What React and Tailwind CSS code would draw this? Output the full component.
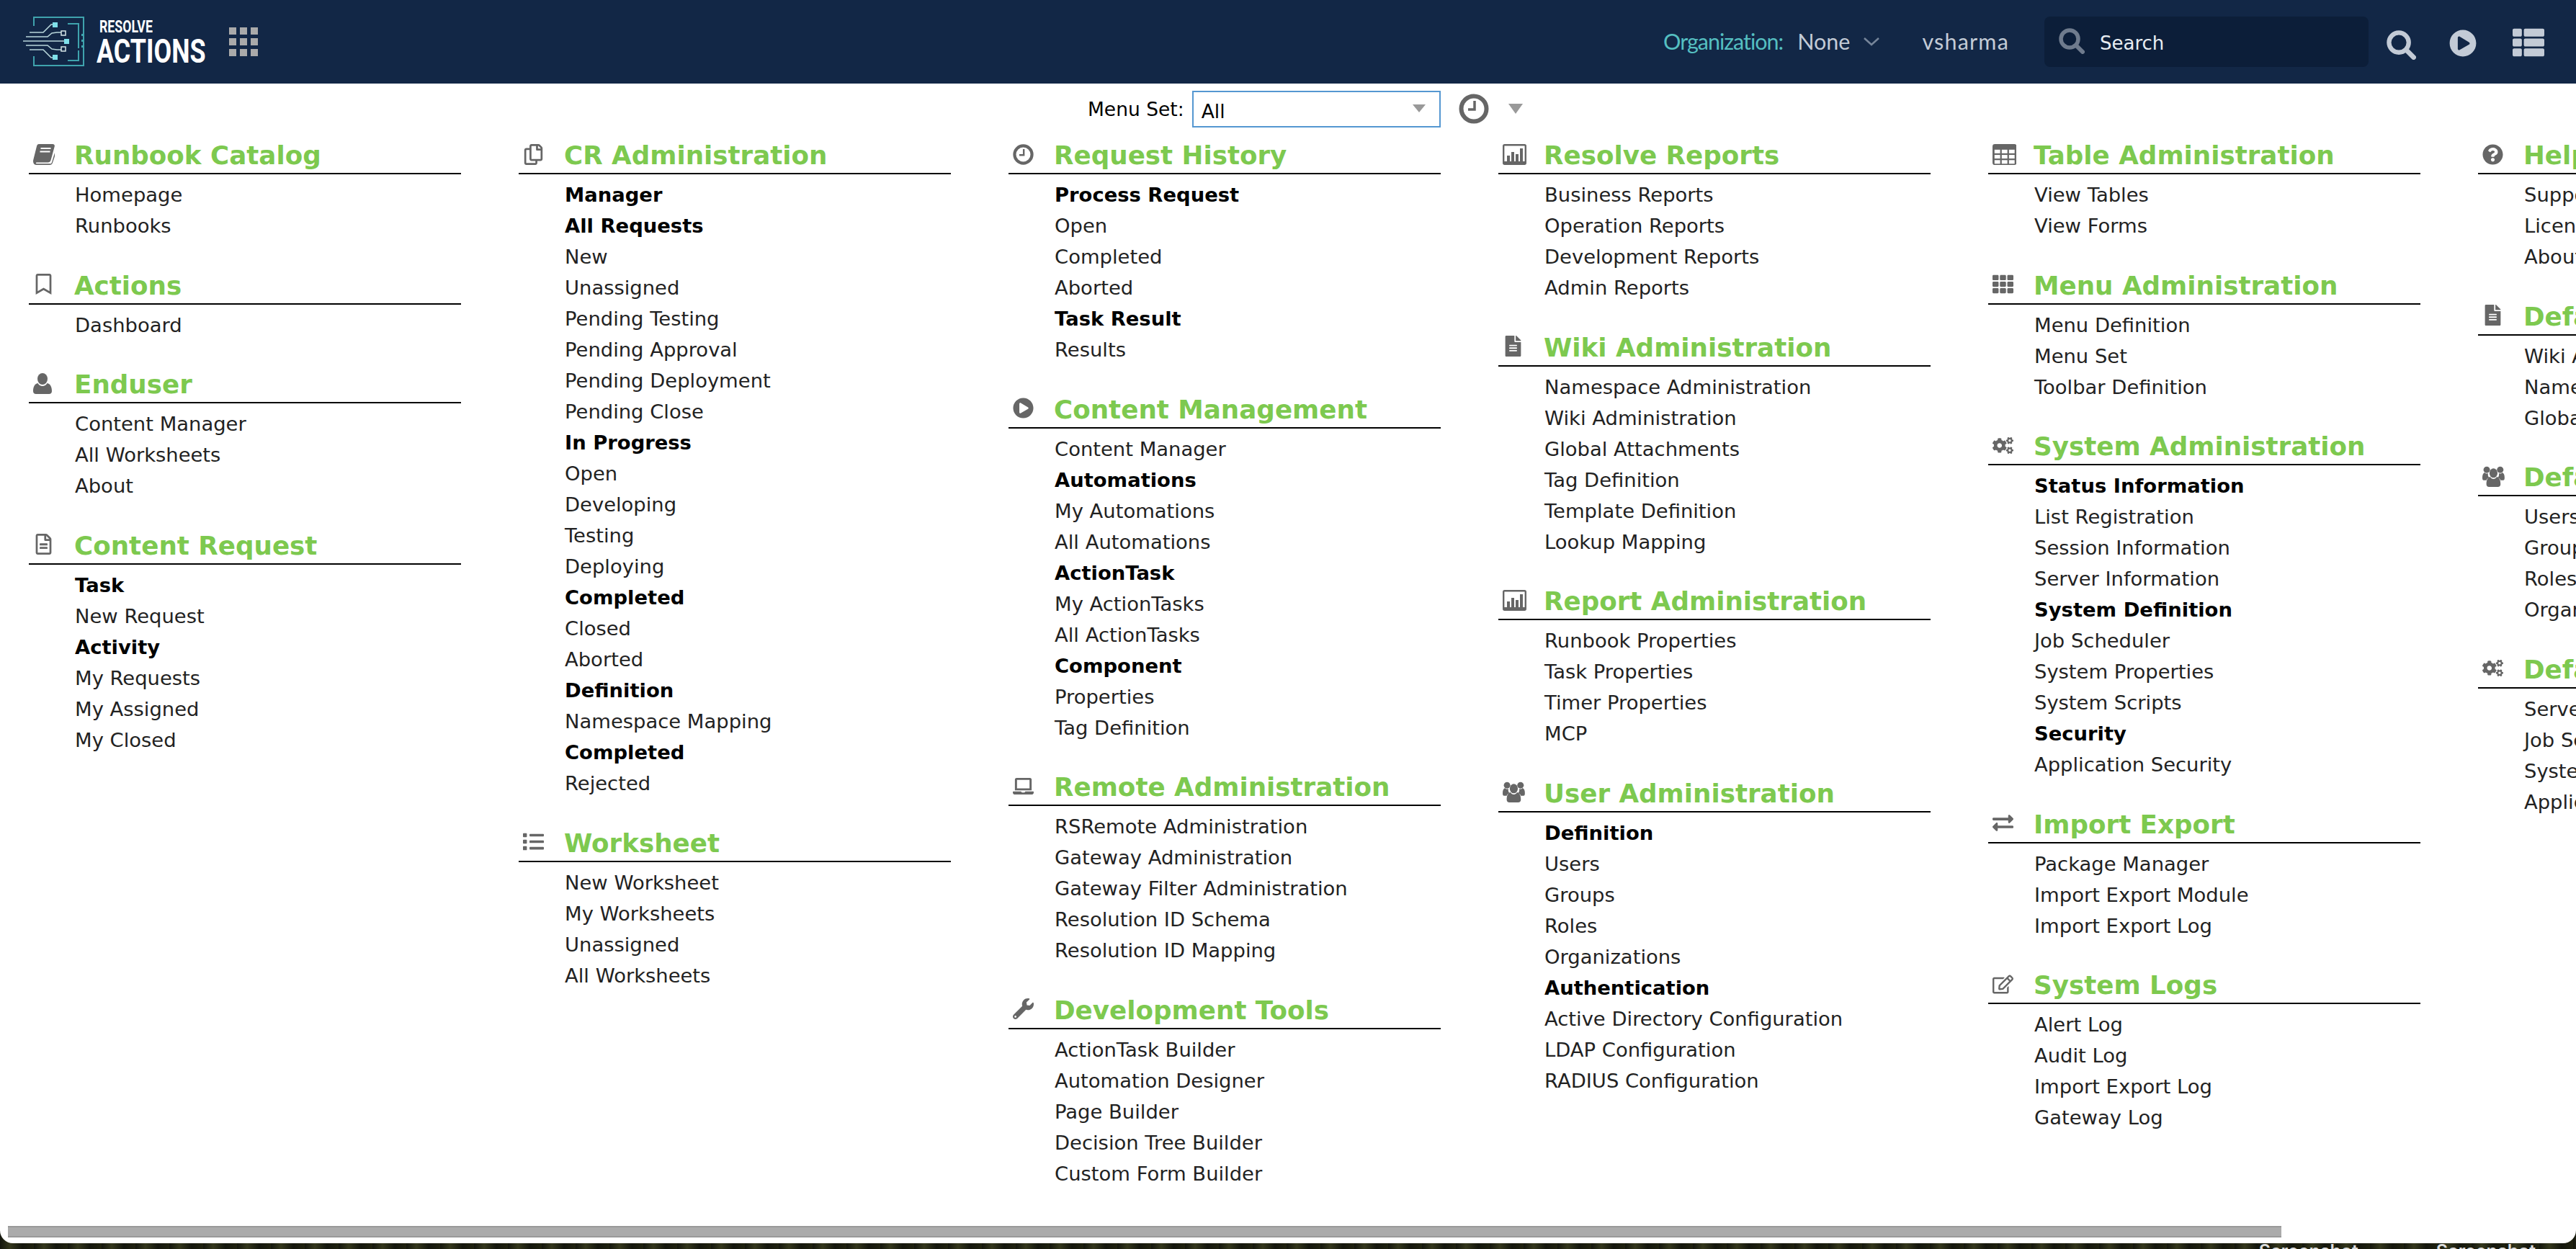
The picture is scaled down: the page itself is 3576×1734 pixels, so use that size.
import { FaRegBookmark, FaRegFileAlt, FaRegCopy, FaList, FaPlayCircle, FaLaptop, FaWrench, FaFileAlt, FaTh, FaCogs, FaExchangeAlt, FaRegEdit, FaQuestionCircle, FaThList } from 'react-icons/fa';

const b = (label) => ({ label, bold: true });

// drawn by hand, the old font-awesome glyphs are not in the icon package
const BookIcon = ({ className }) => (
    <svg className={className} viewBox="0 0 30 29" fill="currentColor">
        <path d="M8 0h19c2.200 0 3.300 1.500 2.700 3.500l-5.200 19c-.6 2-2 3-4 3H5.500c-2.200 0-2.200 1.800 0 1.800h18c1.200 0 2-.6 2.400-1.900L30 12v5l-3 9c-.6 2-2 3-4 3H5c-3.200 0-5-2-5-5 0-.8.1-1.500.3-2.200L5 3c.5-2 1.400-3 3-3z" />
        <path d="M10.500 6h14M9.500 10.500h14" stroke="#fff" strokeWidth="1.800" />
    </svg>
);
const ChartIcon = ({ className }) => (
    <svg className={className} viewBox="0 0 33 29" fill="currentColor">
        <rect x="1.200" y="1.200" width="30.600" height="26.600" rx="1.500" fill="none" stroke="currentColor" strokeWidth="2.400" />
        <rect x="1" y="24" width="31" height="4" />
        <rect x="6" y="16" width="4" height="8" />
        <rect x="12" y="11" width="4" height="13" />
        <rect x="18" y="14" width="4" height="10" />
        <rect x="24" y="6" width="4" height="18" />
    </svg>
);
const UserIcon = ({ className }) => (
    <svg className={className} viewBox="0 0 26 29" fill="currentColor">
        <ellipse cx="13" cy="8" rx="7" ry="8" />
        <path d="M0 25c0-6 2-10 6.500-11 1.500 2.500 3.800 4 6.500 4s5-1.500 6.500-4C24 15 26 19 26 25c0 2.500-1.500 4-4 4H4c-2.500 0-4-1.500-4-4z" />
    </svg>
);
const UsersIcon = ({ className }) => (
    <svg className={className} viewBox="0 0 33 31" fill="currentColor">
        <ellipse cx="16.500" cy="10.500" rx="6" ry="7" />
        <path d="M6 27c0-6 1.500-10 5.500-11 1.300 2 3 3.200 5 3.200s3.700-1.200 5-3.200c4 1 5.500 5 5.500 11 0 2.500-1.500 4-4 4H10c-2.500 0-4-1.500-4-4z" />
        <circle cx="6.500" cy="5.500" r="4.800" />
        <circle cx="26.500" cy="5.500" r="4.800" />
        <path d="M0 17c0-4 1-6.500 3.500-7.500 1 1.200 2 1.800 3 1.800.8 0 1.500-.2 2.200-.7-.4 1-.5 2-.4 3 .2 1.300.8 2.500 1.700 3.400-2.200.8-3.400 2-4 4H2c-1.300 0-2-1-2-4zM33 17c0-4-1-6.500-3.500-7.500-1 1.200-2 1.800-3 1.800-.8 0-1.500-.2-2.200-.7.4 1 .5 2 .4 3-.2 1.300-.8 2.500-1.700 3.400 2.200.8 3.400 2 4 4H31c1.300 0 2-1 2-4z" />
    </svg>
);
const TableIcon = ({ className }) => (
    <svg className={className} viewBox="0 0 30 26">
        <rect width="30" height="26" rx="3" fill="currentColor" />
        {[7, 13.500, 20].map((y) => [2.500, 11.500, 20.500].map((x) => <rect fill="#fff" height="4.500" key={`${x}-${y}`} width="7" x={x} y={y} />))}
    </svg>
);
const ClockIcon = ({ className }) => (
    <svg className={className} viewBox="0 0 42 42" fill="none" stroke="currentColor">
        <circle cx="21" cy="21" r="17.500" strokeWidth="6" />
        <path d="M22 10v12h-9" strokeWidth="3.500" />
    </svg>
);
const SearchGlass = ({ className }) => (
    <svg className={className} viewBox="0 0 36 36" fill="none" stroke="currentColor">
        <circle cx="15" cy="15" r="12" strokeWidth="5.500" />
        <path d="M24 24l9 9" strokeWidth="6" strokeLinecap="round" />
    </svg>
);

const columns = [
    [
        { title: 'Runbook Catalog', icon: BookIcon, items: ['Homepage', 'Runbooks'] },
        { title: 'Actions', icon: FaRegBookmark, items: ['Dashboard'] },
        { title: 'Enduser', icon: UserIcon, items: ['Content Manager', 'All Worksheets', 'About'] },
        { title: 'Content Request', icon: FaRegFileAlt, items: [b('Task'), 'New Request', b('Activity'), 'My Requests', 'My Assigned', 'My Closed'] },
    ],
    [
        { title: 'CR Administration', icon: FaRegCopy, items: [b('Manager'), b('All Requests'), 'New', 'Unassigned', 'Pending Testing', 'Pending Approval', 'Pending Deployment', 'Pending Close', b('In Progress'), 'Open', 'Developing', 'Testing', 'Deploying', b('Completed'), 'Closed', 'Aborted', b('Definition'), 'Namespace Mapping', b('Completed'), 'Rejected'] },
        { title: 'Worksheet', icon: FaList, items: ['New Worksheet', 'My Worksheets', 'Unassigned', 'All Worksheets'] },
    ],
    [
        { title: 'Request History', icon: ClockIcon, items: [b('Process Request'), 'Open', 'Completed', 'Aborted', b('Task Result'), 'Results'] },
        { title: 'Content Management', icon: FaPlayCircle, items: ['Content Manager', b('Automations'), 'My Automations', 'All Automations', b('ActionTask'), 'My ActionTasks', 'All ActionTasks', b('Component'), 'Properties', 'Tag Definition'] },
        { title: 'Remote Administration', icon: FaLaptop, items: ['RSRemote Administration', 'Gateway Administration', 'Gateway Filter Administration', 'Resolution ID Schema', 'Resolution ID Mapping'] },
        { title: 'Development Tools', icon: FaWrench, items: ['ActionTask Builder', 'Automation Designer', 'Page Builder', 'Decision Tree Builder', 'Custom Form Builder'] },
    ],
    [
        { title: 'Resolve Reports', icon: ChartIcon, items: ['Business Reports', 'Operation Reports', 'Development Reports', 'Admin Reports'] },
        { title: 'Wiki Administration', icon: FaFileAlt, items: ['Namespace Administration', 'Wiki Administration', 'Global Attachments', 'Tag Definition', 'Template Definition', 'Lookup Mapping'] },
        { title: 'Report Administration', icon: ChartIcon, items: ['Runbook Properties', 'Task Properties', 'Timer Properties', 'MCP'] },
        { title: 'User Administration', icon: UsersIcon, items: [b('Definition'), 'Users', 'Groups', 'Roles', 'Organizations', b('Authentication'), 'Active Directory Configuration', 'LDAP Configuration', 'RADIUS Configuration'] },
    ],
    [
        { title: 'Table Administration', icon: TableIcon, items: ['View Tables', 'View Forms'] },
        { title: 'Menu Administration', icon: FaTh, items: ['Menu Definition', 'Menu Set', 'Toolbar Definition'] },
        { title: 'System Administration', icon: FaCogs, items: [b('Status Information'), 'List Registration', 'Session Information', 'Server Information', b('System Definition'), 'Job Scheduler', 'System Properties', 'System Scripts', b('Security'), 'Application Security'] },
        { title: 'Import Export', icon: FaExchangeAlt, items: ['Package Manager', 'Import Export Module', 'Import Export Log'] },
        { title: 'System Logs', icon: FaRegEdit, items: ['Alert Log', 'Audit Log', 'Import Export Log', 'Gateway Log'] },
    ],
    [
        { title: 'Help', icon: FaQuestionCircle, items: ['Support', 'License Information', 'About'] },
        { title: 'Default Wiki', icon: FaFileAlt, items: ['Wiki Administration', 'Namespace Administration', 'Global Attachments'] },
        { title: 'Default Users', icon: UsersIcon, items: ['Users', 'Groups', 'Roles', 'Organizations'] },
        { title: 'Default System', icon: FaCogs, items: ['Server Information', 'Job Scheduler', 'System Properties', 'Application Security'] },
    ],
];

function Logo() {
    return (
        <svg className="h-[72px] w-[90px] shrink-0" viewBox="0 0 90 72" fill="none">
            <path d="M15 14V2h69v67H15V56" stroke="#3fa3ad" strokeWidth="2" />
            <path d="M62 11h15v34M62 62h15V48" stroke="#3fa3ad" strokeWidth="2" />
            <path d="M82 25v3M82 33v3M82 41v3" stroke="#3fa3ad" strokeWidth="2" />
            <path d="M9 23h19l11-11h6M4 29h30l6-5 7-1h6M0 35h60M4 41h30l6 5 7 1h6M9 47h19l11 11h6" stroke="#b8d6da" strokeWidth="1.600" />
            <rect x="41" y="9" width="7" height="7" fill="#7fe0ea" />
            <rect x="41" y="54" width="7" height="7" fill="#7fe0ea" />
            <rect x="57" y="32" width="7" height="7" fill="#7fe0ea" />
            <rect x="53" y="21" width="6" height="6" stroke="#d7e6e8" strokeWidth="1.500" />
            <rect x="53" y="43" width="6" height="6" stroke="#d7e6e8" strokeWidth="1.500" />
        </svg>
    );
}

function Section({ section }) {
    const Icon = section.icon;
    return (
        <section className="mb-[39.5px]">
            <div className="flex h-[48px] items-center border-b-2 border-black">
                <span className="flex w-[63px] shrink-0 -translate-y-[3px] pl-[6px] text-[#666]"><Icon className="h-[29px] w-auto" /></span>
                <h2 className="-translate-y-[1px] whitespace-nowrap text-[35.7px] leading-[46px] font-bold text-[#7dc94f]">{section.title}</h2>
            </div>
            <ul className="pt-[7px] pl-[64px]">
                {section.items.map((item, i) => {
                    const bold = typeof item !== 'string';
                    return <li className={`h-[43px] whitespace-nowrap text-[27.4px] leading-[43px] ${bold ? 'font-bold text-black' : 'text-[#222]'}`} key={i}>{bold ? item.label : item}</li>;
                })}
            </ul>
        </section>
    );
}

export default function App() {
    return (
        <div className="h-[1734px] w-[3576px] overflow-hidden bg-[repeating-linear-gradient(90deg,#14160d_0px,#34371c_14px,#14160d_31px,#20220f_47px)] font-['DejaVu_Sans',sans-serif]">
            <div className="flex h-[1726px] flex-col overflow-hidden rounded-b-[18px] bg-white">
                <header className="flex h-[116px] shrink-0 items-center bg-[#122746] pl-[32px] text-[#c3cbd6]">
                    <Logo />
                    <div className="mt-[2px] ml-[13px] flex w-[150px] flex-col font-['Roboto',sans-serif] font-bold text-white">
                        <span className="ml-[3px] origin-left scale-x-[0.77] text-[23px] leading-[24px] whitespace-nowrap">RESOLVE</span>
                        <span className="-ml-[1px] origin-left scale-x-[0.78] text-[46px] leading-[42px] whitespace-nowrap">ACTIONS</span>
                    </div>
                    <div className="ml-[33px] grid grid-cols-3 gap-[5px]">
                        {Array.from({ length: 9 }).map((_, i) => <span className="size-[10px] bg-[#aaa]" key={i} />)}
                    </div>
                    <div className="ml-auto flex items-center pr-[44px] font-['Lato',sans-serif] text-[30.5px]">
                        <span className="tracking-[-1px] text-[#55bfc1]">Organization:</span>
                        <span className="ml-[20px]">None</span>
                        <svg className="ml-[19px] h-[12px] w-[22px]" viewBox="0 0 22 12" fill="none" stroke="#76859a" strokeWidth="2.500"><path d="M1 1l10 9 10-9" /></svg>
                        <span className="ml-[59px] tracking-[1.2px]">vsharma</span>
                        <div className="ml-[49px] flex h-[70px] w-[450px] items-center rounded-[8px] bg-[#0c1e39] pl-[20px] font-['DejaVu_Sans',sans-serif] tracking-normal">
                            <SearchGlass className="size-[36px] -translate-y-[1px] text-[#6f7b8d]" />
                            <span className="ml-[21px] translate-y-[2px] text-[26px] text-[#e8edf2]">Search</span>
                        </div>
                        <SearchGlass className="ml-[25px] size-[41px] translate-y-[4px]" />
                        <FaPlayCircle className="ml-[46px] size-[38px] translate-y-[2px]" />
                        <FaThList className="ml-[50px] size-[44px] translate-y-[1px]" />
                    </div>
                </header>
                <div className="flex h-[64px] shrink-0 items-center pt-[7px] pl-[1510px]">
                    <span className="text-[26.5px] text-black">Menu Set:</span>
                    <div className="ml-[11px] flex h-[51px] w-[345px] items-center justify-between border-2 border-[#5597d1] pr-[19px] pl-[11px] text-[26.5px] text-black">
                        <span className="translate-y-[3px]">All</span>
                        <span className="-translate-y-[1px] border-x-[9px] border-t-[11px] border-x-transparent border-t-[#999]" />
                    </div>
                    <ClockIcon className="ml-[25px] size-[42px] -translate-y-[1px] text-[#666]" />
                    <span className="ml-[27px] -translate-y-[1px] border-x-[10px] border-t-[14px] border-x-transparent border-t-[#999]" />
                </div>
                <div className="flex min-h-0 flex-1 gap-[80px] overflow-hidden pt-[14px] pl-[40px]">
                    {columns.map((col, i) => (
                        <div className="w-[600px] shrink-0" key={i}>
                            {col.map((section) => <Section key={section.title} section={section} />)}
                        </div>
                    ))}
                </div>
                <div className="h-[24px] shrink-0 pl-[11px]">
                    <div className="h-[16px] w-[3156px] border-y-2 border-[#999] bg-[#ababab]" />
                </div>
            </div>
            <div className="flex justify-end gap-[108px] pr-[56px] font-['Inter',sans-serif] text-[25px] leading-[22px] font-semibold text-[#ddd]">
                <span>Screenshot</span>
                <span>Screenshot</span>
            </div>
        </div>
    );
}
